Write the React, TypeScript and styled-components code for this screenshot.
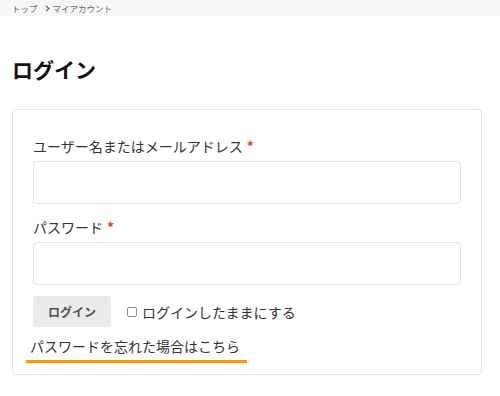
import React, { useState } from 'react'
import styled, { createGlobalStyle } from 'styled-components'

const GlobalStyle = createGlobalStyle`
    * {
        box-sizing: border-box;
    }
    body {
        margin: 0;
        background: #fff;
        color: #333;
        font-family: "Noto Sans CJK JP", "Noto Sans", sans-serif;
    }
`

const Breadcrumb = styled.nav`
    height: 16px;
    background: #f7f7f7;
    padding: 0 12px;
    display: flex;
    align-items: center;
    gap: 2px;
    font-size: 8.5px;
    color: #666;
`

const Crumb = styled.span`
    line-height: 1;
`

const Chevron = styled.svg`
    width: 7px;
    height: 7px;
    margin-left: 4px;
`

const Main = styled.main`
    padding: 0 18px 0 12px;
`

const Title = styled.h1`
    margin: 37px 0 24px;
    font-size: 21px;
    font-weight: 700;
    line-height: 32px;
    color: #111;
`

const Card = styled.form`
    border: 1px solid #e3e3e3;
    border-radius: 4px;
    padding: 24px 20px 11px;
`

const Field = styled.div`
    display: flex;
    flex-direction: column;
    gap: 3px;
    margin-bottom: 11px;
`

const Label = styled.label`
    font-size: 14px;
    line-height: 24px;
    color: #333;
`

const Required = styled.span`
    color: #e2401c;
    font-weight: 700;
    margin-left: 4px;
`

const Input = styled.input`
    height: 43px;
    width: 100%;
    border: 1px solid #e3e3e3;
    border-radius: 4px;
    background: #fff;
    padding: 0 10px;
    font-size: 14px;
    outline: none;
`

const ActionRow = styled.div`
    display: flex;
    align-items: center;
    gap: 16px;
    margin-top: 1px;
`

const SubmitButton = styled.button`
    width: 78px;
    height: 31px;
    border: none;
    border-radius: 3px;
    background: #ebe9eb;
    color: #515151;
    font-family: inherit;
    font-size: 12px;
    font-weight: 700;
    cursor: pointer;
`

const Remember = styled.label`
    display: flex;
    align-items: center;
    gap: 5px;
    font-size: 14px;
    color: #333;
`

const Check = styled.input`
    appearance: none;
    width: 10px;
    height: 10px;
    margin: 1px 0 0;
    border: 1px solid #8f8f8f;
    border-radius: 2px;
    background: #fff;
`

const Lost = styled.a`
    display: inline-block;
    margin: 8px 0 0 -7px;
    padding: 0 7px 3px 4px;
    font-size: 14px;
    line-height: 22px;
    color: #333;
    text-decoration: none;
    border-bottom: 3px solid #ff9900;
`

export default function App() {
    const [remember, setRemember] = useState(false)

    return <>
        <GlobalStyle />
        <Breadcrumb>
            <Crumb>トップ</Crumb>
            <Chevron viewBox="0 0 8 8">
                <path d="M2.5 1 L5.5 4 L2.5 7" fill="none" stroke="#666" strokeWidth="1.6" />
            </Chevron>
            <Crumb>マイアカウント</Crumb>
        </Breadcrumb>
        <Main>
            <Title>ログイン</Title>
            <Card onSubmit={e => e.preventDefault()}>
                <Field>
                    <Label htmlFor="username">ユーザー名またはメールアドレス<Required>*</Required></Label>
                    <Input id="username" type="text" />
                </Field>
                <Field>
                    <Label htmlFor="password">パスワード<Required>*</Required></Label>
                    <Input id="password" type="password" />
                </Field>
                <ActionRow>
                    <SubmitButton type="submit">ログイン</SubmitButton>
                    <Remember>
                        <Check type="checkbox" checked={remember} onChange={() => setRemember(!remember)} />
                        ログインしたままにする
                    </Remember>
                </ActionRow>
                <Lost href="#">パスワードを忘れた場合はこちら</Lost>
            </Card>
        </Main>
    </>
}
